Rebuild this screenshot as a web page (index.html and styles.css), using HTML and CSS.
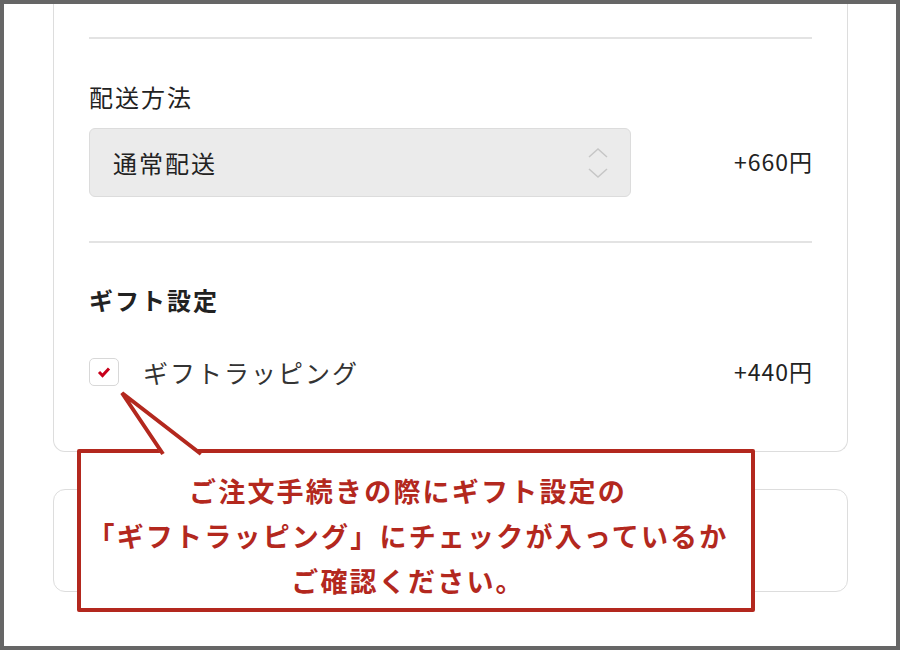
FILE: index.html
```html
<!DOCTYPE html>
<html lang="ja">
<head>
  <meta charset="UTF-8" />
  <meta name="viewport" content="width=device-width, initial-scale=1.0"/>
  <title>ギフト設定</title>
  <link rel="stylesheet" href="styles.css">
</head>
<body>
  <div class="frame">
    <div class="card">
      <hr class="divider" />
      <div class="label">配送方法</div>
      <div class="row">
        <div class="select">
          <span>通常配送</span>
          <svg class="chevrons" width="22" height="36" viewBox="0 0 22 36">
            <polyline points="2,12 11,4 20,12" />
            <polyline points="2,24 11,32 20,24" />
          </svg>
        </div>
        <div class="price">+660円</div>
      </div>
      <hr class="divider gap" />
      <div class="heading">ギフト設定</div>
      <div class="row check-row">
        <div class="checkbox">
          <svg width="14" height="12" viewBox="0 0 14 12">
            <polyline points="2,6 5.5,9.5 12,2.5" />
          </svg>
        </div>
        <div class="check-label">ギフトラッピング</div>
        <div class="price">+440円</div>
      </div>
    </div>
    <div class="card second"></div>

    <svg class="tail" width="100" height="70" viewBox="0 0 100 70">
      <polygon points="51,66 12,5 93,66" />
      <polyline points="53,66 12,5 91,66" />
    </svg>
    <div class="callout">
      ご注文手続きの際にギフト設定の<br>
      「ギフトラッピング」にチェックが入っているか<br>
      ご確認ください。
    </div>
  </div>
</body>
</html>
```

FILE: styles.css
```css
body {
  margin: 0;
  font-family: "Noto Sans CJK JP", "Noto Sans", sans-serif;
  color: #222;
}
.frame {
  position: relative;
  width: 900px;
  height: 650px;
  box-sizing: border-box;
  border: 4px solid #666;
  background: #fff;
  overflow: hidden;
  padding: 0 48px 0 49px;
}
.card {
  border: 1px solid #ddd;
  border-top: none;
  border-radius: 0 0 12px 12px;
  padding: 33px 35px 64px;
}
.card.second {
  border-top: 1px solid #ddd;
  border-radius: 12px;
  margin-top: 37px;
  height: 101px;
  padding: 0;
}
.divider {
  border: none;
  border-top: 2px solid #e3e3e3;
  margin: 0;
}
.divider.gap {
  margin-top: 44px;
}
.label {
  margin-top: 43px;
  font-size: 24px;
  letter-spacing: 2px;
  line-height: 30px;
}
.row {
  display: flex;
  align-items: center;
}
.select {
  margin-top: 16px;
  width: 542px;
  height: 69px;
  box-sizing: border-box;
  background: #ebebeb;
  border: 1px solid #dcdcdc;
  border-radius: 6px;
  display: flex;
  align-items: center;
  justify-content: space-between;
  padding: 0 21px 0 23px;
  font-size: 24px;
  letter-spacing: 2px;
}
.chevrons polyline {
  fill: none;
  stroke: #c6c6c6;
  stroke-width: 1.5;
}
.price {
  margin-left: auto;
  font-size: 23px;
  letter-spacing: 1px;
  margin-right: -1px;
}
.row .select + .price {
  margin-top: 12px;
}
.heading {
  margin-top: 42px;
  font-size: 24px;
  letter-spacing: 2px;
  line-height: 30px;
  font-weight: bold;
}
.check-row {
  margin-top: 42px;
  height: 30px;
}
.check-row .price {
  margin-top: -3px;
}
.checkbox {
  width: 30px;
  height: 28px;
  box-sizing: border-box;
  border: 1px solid #d8d8d8;
  border-radius: 5px;
  display: flex;
  align-items: center;
  justify-content: center;
}
.checkbox polyline {
  fill: none;
  stroke: #c8001a;
  stroke-width: 3;
}
.check-label {
  margin-left: 24px;
  font-size: 25px;
  letter-spacing: 2px;
  color: #333;
}
.callout {
  position: absolute;
  left: 73px;
  top: 445px;
  width: 678px;
  height: 163px;
  box-sizing: border-box;
  border: 4px solid #b3281e;
  border-radius: 2px;
  background: #fff;
  padding: 15px 16px 0 0;
  text-align: center;
  color: #b3281e;
  font-weight: bold;
  font-size: 27px;
  letter-spacing: 2.2px;
  line-height: 45px;
}
.tail {
  position: absolute;
  left: 106px;
  top: 384px;
  z-index: 2;
}
.tail polygon {
  fill: #fff;
}
.tail polyline {
  fill: none;
  stroke: #b3281e;
  stroke-width: 4;
}
```
